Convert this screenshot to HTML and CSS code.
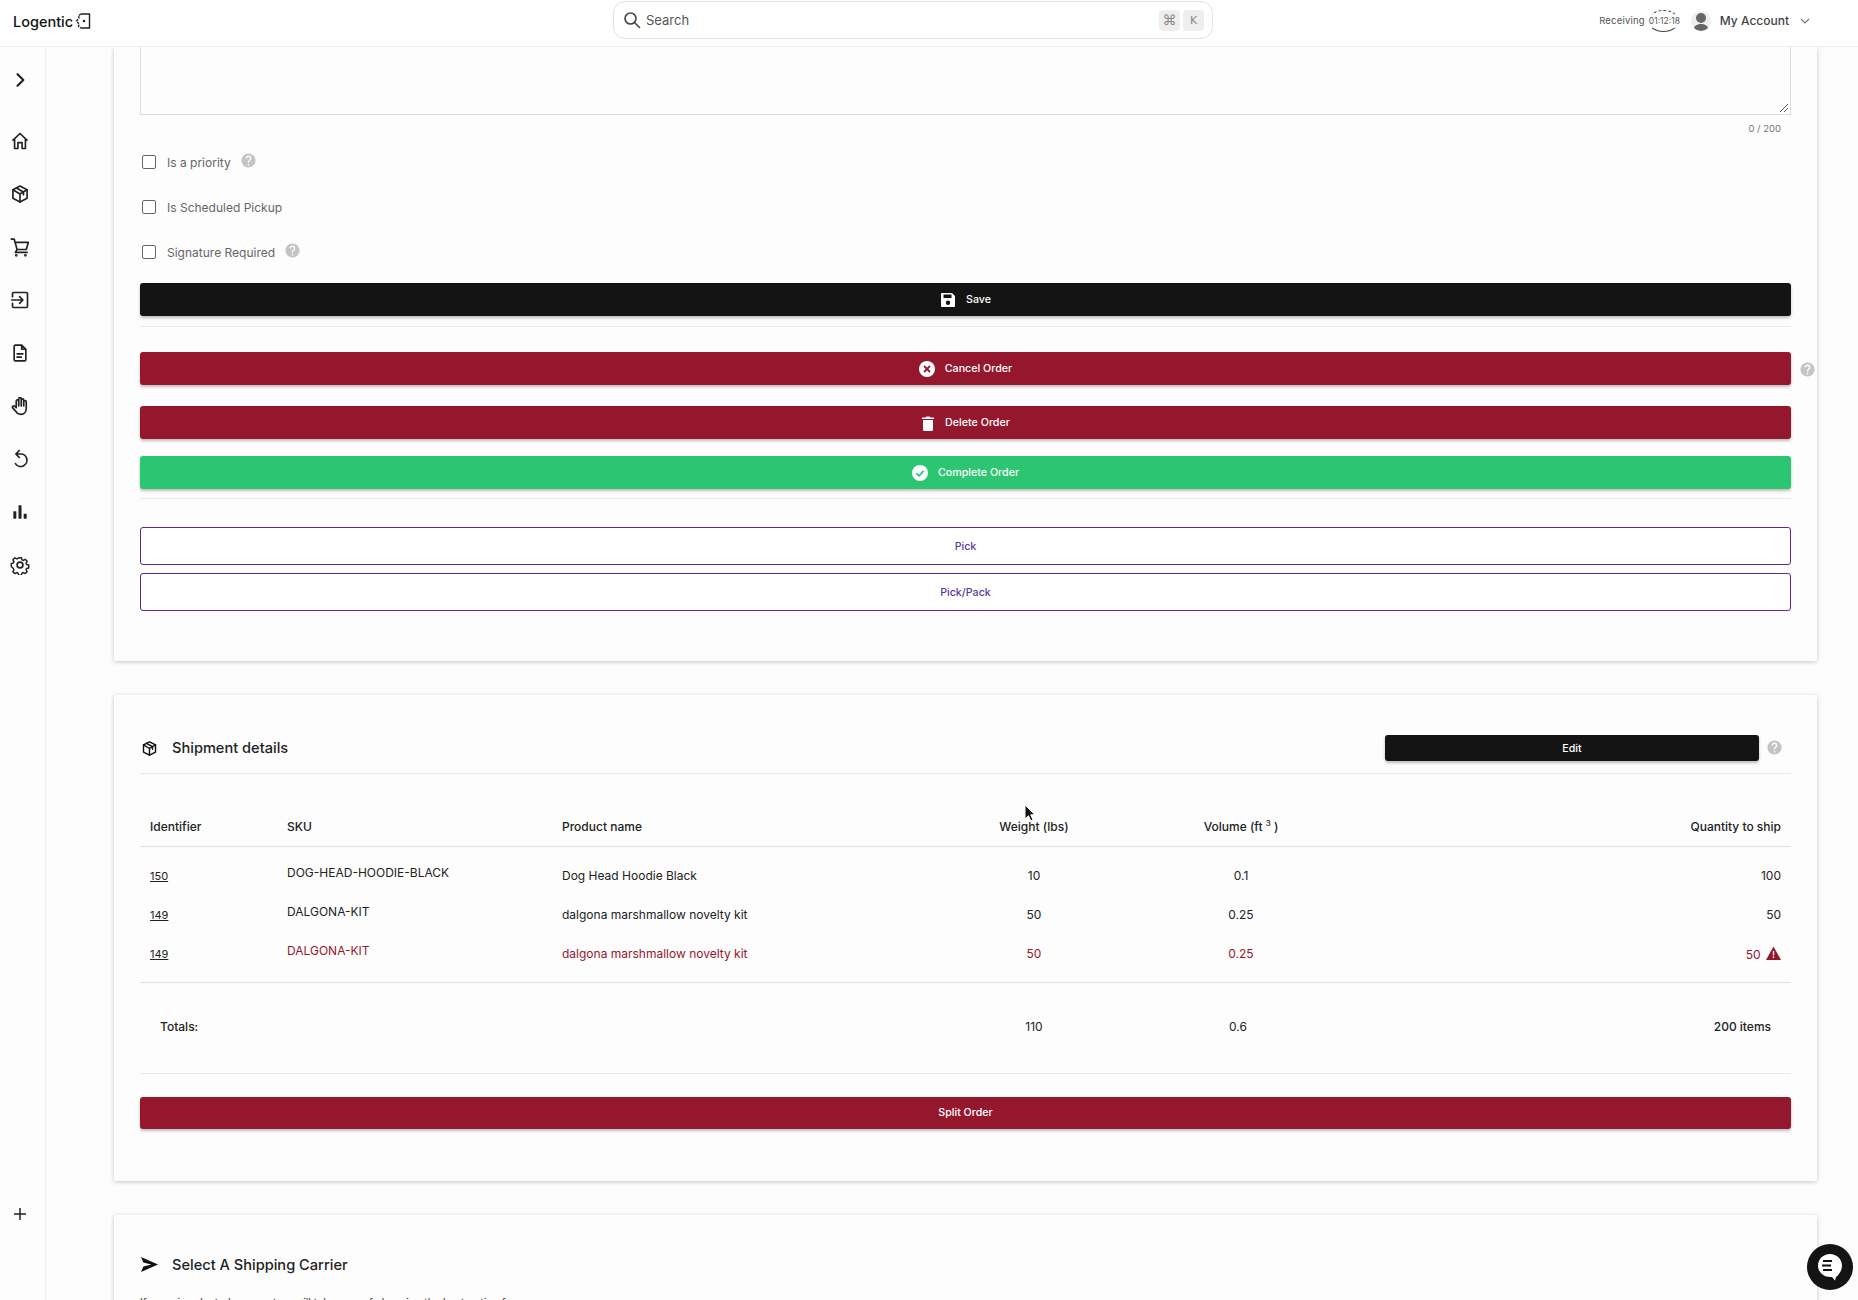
FILE: index.html
```html
<!DOCTYPE html>
<html lang="en">
<head>
  <meta charset="UTF-8" />
  <meta name="viewport" content="width=device-width, initial-scale=1.0" />
  <title>Logentic - Order</title>
  <link rel="stylesheet" href="styles.css">
</head>
<body>
  <svg class="defs" width="0" height="0">
    <symbol id="help" viewBox="0 0 24 24">
      <path fill="currentColor" d="M12 2a10 10 0 1 0 0 20 10 10 0 0 0 0-20zm1 17h-2v-2h2zm2.100-7.700-.9.9c-.8.7-1.200 1.300-1.200 2.800h-2v-.5c0-1.100.4-2.100 1.200-2.800l1.200-1.300c.4-.3.6-.8.6-1.400a2 2 0 0 0-4 0H8a4 4 0 0 1 8 0c0 .9-.4 1.700-.9 2.300z"/>
    </symbol>
    <symbol id="box" viewBox="0 0 24 24">
      <g fill="none" stroke="currentColor" stroke-width="2" stroke-linejoin="round" stroke-linecap="round">
        <path d="M12 2.500 20.500 7v10L12 21.500 3.500 17V7z"/>
        <path d="M3.500 7 12 12l8.500-5M12 12v9.500M7.700 4.700l8.500 4.800v3.500"/>
      </g>
    </symbol>
  </svg>

  <header class="topbar">
    <div class="brand">
      <span>Logentic</span>
      <svg width="18" height="18" viewBox="0 0 18 18" fill="none" stroke="#222" stroke-width="1.400">
        <path d="M7 2h8.500v14H7" />
        <path d="M7 2 4.500 3.500 5 6 2.500 9 5 12l-.5 2.500L7 16" stroke-dasharray="2.500 1"/>
        <circle cx="10" cy="9" r="1.300" fill="#222" stroke="none"/>
      </svg>
    </div>
    <div class="search">
      <svg width="18" height="18" viewBox="0 0 18 18" fill="none" stroke="#444" stroke-width="1.600" stroke-linecap="round">
        <circle cx="7.500" cy="7.500" r="5.500"/>
        <path d="m11.700 11.700 4.800 4.800"/>
      </svg>
      <span class="search-label">Search</span>
      <kbd class="key">⌘</kbd>
      <kbd class="key">K</kbd>
    </div>
    <div class="account">
      <span class="timer-label">Receiving</span>
      <span class="timer">01:12:18</span>
      <span class="avatar">
        <svg width="20" height="20" viewBox="0 0 20 20" fill="#666">
          <circle cx="10" cy="7" r="5"/>
          <path d="M2.500 20c0-5 3-7 7.500-7s7.500 2 7.500 7z"/>
        </svg>
      </span>
      <span class="account-name">My Account</span>
      <svg class="chevron" width="12" height="12" viewBox="0 0 12 12" fill="none" stroke="#777" stroke-width="1.200">
        <path d="m2 4 4 4 4-4"/>
      </svg>
    </div>
  </header>

  <div class="shell">
    <nav class="sidebar">
      <svg class="nav-toggle" width="20" height="20" viewBox="0 0 24 24" fill="none" stroke="#222" stroke-width="2.600" stroke-linecap="round" stroke-linejoin="round"><path d="m9 5 7 7-7 7"/></svg>
      <ul class="nav-list">
        <li><svg width="20" height="20" viewBox="0 0 24 24" fill="none" stroke="#222" stroke-width="2" stroke-linejoin="round"><path d="M3 11.500 12 3l9 8.500M5.500 9.500V21h4v-7h5v7h4V9.500"/></svg></li>
        <li><svg width="20" height="20" class="nav-box"><use href="#box"/></svg></li>
        <li><svg width="20" height="20" viewBox="0 0 24 24" fill="none" stroke="#222" stroke-width="2" stroke-linecap="round" stroke-linejoin="round"><path d="M1.500 2.500H5l3.500 12.500h11L22 6.500H6M8.500 15l-2 3.500h14"/><circle cx="7.500" cy="22" r=".7"/><circle cx="18.500" cy="22" r=".7"/></svg></li>
        <li><svg width="20" height="20" viewBox="0 0 24 24" fill="none" stroke="#222" stroke-width="2" stroke-linecap="round" stroke-linejoin="round"><path d="M3 8V4.500A1.500 1.500 0 0 1 4.500 3h15A1.500 1.500 0 0 1 21 4.500v15a1.500 1.500 0 0 1-1.500 1.500h-15A1.500 1.500 0 0 1 3 19.500V16M2 12h13M11.500 8l4 4-4 4"/></svg></li>
        <li><svg width="20" height="20" viewBox="0 0 24 24" fill="none" stroke="#222" stroke-width="2" stroke-linecap="round" stroke-linejoin="round"><path d="M14 2.500H6.500A1.500 1.500 0 0 0 5 4v16a1.500 1.500 0 0 0 1.500 1.500h11A1.500 1.500 0 0 0 19 20V7.500zM14 2.500v5h5M8.500 13h7M8.500 17h5"/></svg></li>
        <li><svg width="20" height="20" viewBox="0 0 24 24" fill="none" stroke="#222" stroke-width="2" stroke-linecap="round" stroke-linejoin="round"><path d="M7.500 13V6a1.500 1.500 0 0 1 3 0V3.500a1.500 1.500 0 0 1 3 0V5a1.500 1.500 0 0 1 3 0v2a1.500 1.500 0 0 1 3 0v8c0 4-2.500 7-6.500 7-3 0-4.500-1-6-3.500L3 14c-.7-1.200 1-3 2.500-1.800L7.500 14M10.500 6v6M13.500 4v8M16.500 6v6"/></svg></li>
        <li><svg width="20" height="20" viewBox="0 0 24 24" fill="none" stroke="#222" stroke-width="2" stroke-linecap="round" stroke-linejoin="round"><path d="M6.500 17.500A7.500 7.500 0 1 0 12 6H7.500M11 2 7 6l4 4"/></svg></li>
        <li><svg width="20" height="20" viewBox="0 0 24 24" fill="#222"><rect x="4" y="11" width="3.600" height="9" rx=".5"/><rect x="10.200" y="4" width="3.600" height="16" rx=".5"/><rect x="16.400" y="14" width="3.600" height="6" rx=".5"/></svg></li>
        <li><svg width="20" height="20" viewBox="0 0 24 24" fill="none" stroke="#222" stroke-width="2" stroke-linejoin="round"><path d="M10 2h4l.7 2.900 1.800.8 2.600-1.500 2.700 2.700-1.500 2.600.8 1.800 2.900.7v4l-2.900.7-.8 1.800 1.500 2.600-2.700 2.700-2.600-1.500-1.800.8-.7 2.900h-4l-.7-2.900-1.800-.8-2.600 1.500-2.700-2.700 1.500-2.600-.8-1.800L0 14v-4l2.900-.7.800-1.800-1.500-2.600 2.700-2.700 2.600 1.500 1.800-.8z" transform="translate(1.500 1.500) scale(.875)"/><circle cx="12" cy="12" r="3.500"/></svg></li>
      </ul>
      <svg class="nav-add" width="16" height="16" viewBox="0 0 16 16" stroke="#222" stroke-width="1.500"><path d="M8 2v12M2 8h12"/></svg>
    </nav>

    <main class="content">
      <section class="card card-cut">
        <div class="notes"><svg class="grip" width="10" height="10" viewBox="0 0 10 10" stroke="#555"><path d="m1 9 8-8M5 9l4-4"/></svg></div>
        <div class="counter">0 / 200</div>

        <label class="check check-first"><span class="box"></span>Is a priority<svg class="help help-up"><use href="#help"/></svg></label>
        <label class="check check-second"><span class="box"></span>Is Scheduled Pickup</label>
        <label class="check check-third"><span class="box"></span>Signature Required<svg class="help help-up"><use href="#help"/></svg></label>

        <button class="btn btn-black btn-save">
          <svg width="16" height="16" viewBox="0 0 16 16" fill="#fff"><path d="M2 1h10l3 3v10a1 1 0 0 1-1 1H2a1 1 0 0 1-1-1V2a1 1 0 0 1 1-1zm1.500 1.500V6h8V2.500zM8 8.500a2.200 2.200 0 1 0 0 4.400 2.200 2.200 0 0 0 0-4.400z" fill-rule="evenodd"/></svg>
          <span>Save</span>
        </button>
        <hr class="rule rule-save">

        <div class="btn-row">
          <button class="btn btn-red">
            <svg width="16" height="16" viewBox="0 0 16 16"><circle cx="8" cy="8" r="8" fill="#fff"/><path d="m5 5 6 6M11 5l-6 6" stroke="#95172d" stroke-width="1.800"/></svg>
            <span>Cancel Order</span>
          </button>
          <svg class="help help-side"><use href="#help"/></svg>
        </div>
        <button class="btn btn-red btn-delete">
          <svg width="14" height="16" viewBox="0 0 14 16" fill="#fff"><path d="M2 5h10v9.500a1.500 1.500 0 0 1-1.500 1.500h-7A1.500 1.500 0 0 1 2 14.500zM1 2.500h3.500L5.500 1.500h3l1 1H13V4H1z"/></svg>
          <span>Delete Order</span>
        </button>
        <button class="btn btn-green">
          <svg width="16" height="16" viewBox="0 0 16 16"><circle cx="8" cy="8" r="8" fill="#fff"/><path d="m4.300 8.300 2.700 2.500 4.700-5" fill="none" stroke="#2cc672" stroke-width="1.800"/></svg>
          <span>Complete Order</span>
        </button>
        <hr class="rule rule-complete">

        <button class="btn btn-outline">Pick</button>
        <button class="btn btn-outline btn-pack">Pick/Pack</button>
      </section>

      <section class="card card-shipment">
        <div class="card-head">
          <svg class="head-icon"><use href="#box"/></svg>
          <h2>Shipment details</h2>
          <button class="btn btn-black btn-edit">Edit</button>
          <svg class="help help-edit"><use href="#help"/></svg>
        </div>

        <table class="items">
          <thead>
            <tr>
              <th class="col-id">Identifier</th>
              <th class="col-sku">SKU</th>
              <th class="col-name">Product name</th>
              <th class="col-weight">Weight (lbs)</th>
              <th class="col-volume">Volume (ft <sup>3</sup> )</th>
              <th class="col-qty">Quantity to ship</th>
            </tr>
          </thead>
          <tbody>
            <tr>
              <td class="col-id"><a href="#">150</a></td>
              <td class="col-sku"><span>DOG-HEAD-HOODIE-BLACK</span></td>
              <td class="col-name">Dog Head Hoodie Black</td>
              <td class="col-weight">10</td>
              <td class="col-volume">0.1</td>
              <td class="col-qty">100</td>
            </tr>
            <tr>
              <td class="col-id"><a href="#">149</a></td>
              <td class="col-sku"><span>DALGONA-KIT</span></td>
              <td class="col-name">dalgona marshmallow novelty kit</td>
              <td class="col-weight">50</td>
              <td class="col-volume">0.25</td>
              <td class="col-qty">50</td>
            </tr>
            <tr class="short">
              <td class="col-id"><a href="#">149</a></td>
              <td class="col-sku"><span>DALGONA-KIT</span></td>
              <td class="col-name">dalgona marshmallow novelty kit</td>
              <td class="col-weight">50</td>
              <td class="col-volume">0.25</td>
              <td class="col-qty">50 <svg class="warn" width="15" height="14" viewBox="0 0 15 14"><path fill="#95172d" d="M7.500.5 15 14H0z"/><path stroke="#fff" stroke-width="1.400" d="M7.500 5v4.500M7.500 10.500V12"/></svg></td>
            </tr>
          </tbody>
          <tfoot>
            <tr>
              <td class="col-id totals-label" colspan="3">Totals:</td>
              <td class="col-weight">110</td>
              <td class="col-volume totals-volume">0.6</td>
              <td class="col-qty totals-qty">200 items</td>
            </tr>
          </tfoot>
        </table>

        <button class="btn btn-red btn-split">Split Order</button>
      </section>

      <section class="card card-carrier">
        <div class="card-head card-head-plain">
          <svg class="head-icon" viewBox="0 0 18 16" fill="#111"><path d="M0 0 18 8 0 16l2.500-6L11 8 2.500 6z"/></svg>
          <h2>Select A Shipping Carrier</h2>
        </div>
        <p class="carrier-note">If none is selected, our system will take care of choosing the best option for you.</p>
      </section>
    </main>
  </div>

  <svg class="pointer" width="12" height="18" viewBox="0 0 12 18"><path d="M1 1v14l3.500-3.200 2.300 5 2.200-1-2.300-5H11z" fill="#111" stroke="#fff" stroke-width="1"/></svg>

  <div class="chat">
    <svg width="26" height="28" viewBox="0 0 26 28"><path fill="#fff" d="M13 1c6.600 0 12 5 12 11.500S19.600 24 19 24l-1 3.500L15 24h-2C6.400 24 1 19 1 12.500S6.400 1 13 1z"/><path stroke="#141414" stroke-width="2" d="M6 8h9M5 12.500h9M6 17h9"/></svg>
  </div>
</body>
</html>
```

FILE: styles.css
```css
* {
  margin: 0;
  padding: 0;
  box-sizing: border-box;
}

html, body {
  height: 1300px;
  overflow: hidden;
}

body {
  font-family: 'Inter', 'Liberation Sans', sans-serif;
  font-size: 12px;
  color: #222;
  background: #fcfcfc;
  position: relative;
  display: flex;
  flex-direction: column;
}

.defs {
  display: block;
  height: 0;
}

/* top bar */
.topbar {
  height: 47px;
  flex-shrink: 0;
  background: #fff;
  border-bottom: 1px solid #efefef;
  display: grid;
  grid-template-columns: 613px 600px 1fr;
  align-items: center;
}

.brand {
  display: flex;
  align-items: center;
  gap: 1px;
  padding: 0 0 4px 13px;
  font-size: 14.500px;
  font-weight: 500;
  color: #111;
}

.search {
  height: 38px;
  margin-top: -6px;
  border: 1px solid #e2e2e2;
  border-radius: 12px;
  display: flex;
  align-items: center;
  gap: 3px;
  padding: 0 8px 0 9px;
  color: #555;
}

.search-label {
  flex: 1;
  margin-left: 2px;
  font-size: 13px;
}

.key {
  width: 21px;
  height: 21px;
  background: #eee;
  border-radius: 4px;
  color: #888;
  font-family: 'DejaVu Sans', sans-serif;
  font-size: 11px;
  text-align: center;
  line-height: 21px;
}

.key:first-of-type {
  font-size: 14px;
}

.account {
  display: flex;
  align-items: center;
  justify-content: flex-end;
  padding: 0 47px 5px 0;
  color: #555;
}

.timer-label {
  font-size: 9.500px;
  letter-spacing: 0.2px;
}

.timer {
  width: 31px;
  margin-left: 3px;
  font-size: 8.500px;
  text-align: center;
  border-radius: 50%;
  padding: 5px 0;
  border-top: 1.500px dashed #444;
  border-bottom: 1.500px solid #444;
  border-left: 1.500px solid transparent;
  border-right: 1.500px solid transparent;
  white-space: nowrap;
}

.avatar {
  width: 20px;
  height: 20px;
  border-radius: 50%;
  margin-left: 12px;
  overflow: hidden;
  background: #eee;
}

.account-name {
  margin-left: 9px;
  font-size: 12px;
  font-weight: 500;
  color: #444;
}

.chevron {
  margin-left: 10px;
}

/* layout */
.shell {
  flex: 1;
  display: flex;
  min-height: 0;
}

.sidebar {
  width: 46px;
  flex-shrink: 0;
  border-right: 1px solid #efefef;
  background: #fdfdfd;
  display: flex;
  flex-direction: column;
  align-items: center;
  padding-right: 5px;
}

.nav-toggle {
  margin-top: 23px;
}

.nav-list {
  list-style: none;
  margin-top: 41px;
  display: flex;
  flex-direction: column;
  gap: 33px;
}

.nav-list li {
  height: 20px;
}

.nav-box {
  color: #222;
}

.nav-add {
  margin-top: auto;
  margin-bottom: 78px;
}

.content {
  flex: 1;
  min-width: 0;
  padding: 0 41px 0 68px;
  display: flex;
  flex-direction: column;
  gap: 34px;
  overflow: hidden;
}

/* cards */
.card {
  background: #fdfdfd;
  border-radius: 2px;
  box-shadow: 0 1px 4px rgba(0, 0, 0, 0.22);
  padding: 0 26px;
  flex-shrink: 0;
}

.card-cut {
  height: 614px;
  border-radius: 0 0 2px 2px;
  clip-path: inset(0 -8px -8px -8px);
}

.notes {
  height: 68px;
  border: 1px solid #dcdcdc;
  border-top: none;
  position: relative;
}

.grip {
  position: absolute;
  right: 1px;
  bottom: 1px;
}

.counter {
  margin-top: 8px;
  padding-right: 10px;
  text-align: right;
  font-size: 9.500px;
  color: #777;
  line-height: 11px;
}

.check {
  display: flex;
  align-items: center;
  padding-left: 2px;
  height: 20px;
  color: #666;
}

.check-first {
  margin-top: 18px;
}

.check-second {
  margin-top: 25px;
}

.check-third {
  margin-top: 25px;
}

.box {
  width: 14px;
  height: 14px;
  margin-right: 11px;
  border: 1.500px solid #666;
  border-radius: 2px;
  background: #fff;
}

.help {
  width: 17px;
  height: 17px;
  color: #c4c4c4;
  flex-shrink: 0;
}

.help-up {
  margin: -4px 0 0 9px;
}

.btn {
  display: flex;
  align-items: center;
  justify-content: center;
  gap: 10px;
  width: 100%;
  height: 33px;
  border: none;
  border-radius: 3px;
  font-family: inherit;
  font-size: 10.700px;
  font-weight: 500;
  color: #fff;
  box-shadow: 0 2px 3px rgba(0, 0, 0, 0.25);
}

.btn-black {
  background: #141414;
}

.btn-red {
  background: #95172d;
}

.btn-green {
  background: #2cc672;
}

.btn-save {
  margin-top: 21px;
}

.rule {
  border: none;
  border-top: 1px solid #e8e8e8;
}

.rule-save {
  margin: 10px 0 25px;
}

.btn-row {
  position: relative;
}

.help-side {
  position: absolute;
  left: calc(100% + 8px);
  top: 9px;
}

.btn-delete {
  margin-top: 21px;
}

.btn-green {
  margin-top: 17px;
}

.rule-complete {
  margin: 9px 0 28px;
}

.btn-outline {
  height: 38px;
  background: #fff;
  border: 1px solid #5a2a90;
  color: #5b3a9e;
  box-shadow: none;
}

.btn-pack {
  margin-top: 8px;
}

.card-shipment {
  height: 486px;
}

.card-head {
  height: 79px;
  display: flex;
  align-items: center;
  border-bottom: 1px solid #e8e8e8;
  padding-top: 28px;
}

.card-head-plain {
  border-bottom: none;
  height: 67px;
  padding-top: 32px;
}

.card-head h2 {
  flex: 1;
  margin-left: 14px;
  font-size: 14.600px;
  font-weight: 500;
  color: #222;
}

.head-icon {
  width: 17px;
  height: 17px;
  margin-left: 1px;
  color: #111;
}

.btn-edit {
  width: 374px;
  height: 26px;
}

.help-edit {
  margin: 0 8px 2px 7px;
}

/* table */
.items {
  width: 100%;
  margin-top: 32px;
  border-collapse: collapse;
  table-layout: fixed;
}

.items th, .items td {
  padding: 0 10px;
  font-weight: 400;
}

.items th {
  height: 40px;
  font-weight: 500;
  border-bottom: 1px solid #e0e0e0;
  padding-top: 2px;
}

.items sup {
  font-size: 8px;
  line-height: 0;
}

.items tbody tr {
  height: 39px;
}

.items tbody tr:first-child {
  height: 49px;
}

.items tbody tr:first-child td {
  padding-top: 10px;
}

.items tbody tr:last-child {
  height: 48px;
}

.items tbody tr:last-child td {
  padding-bottom: 8px;
}

.col-id {
  width: 137px;
  text-align: left;
}

.col-sku {
  width: 275px;
  text-align: left;
}

.col-sku span {
  display: block;
  margin-bottom: 6px;
}

.col-name {
  width: 397px;
  text-align: left;
}

.col-weight {
  width: 170px;
  text-align: center;
}

.col-volume {
  width: 244px;
  text-align: center;
}

.col-qty {
  text-align: right;
}

.col-id a {
  color: #222;
  font-size: 11px;
}

.short td, .short a {
  color: #95172d;
}

.short .col-id a {
  color: #222;
}

.warn {
  vertical-align: -1px;
  margin-left: 2px;
}

.items tfoot tr {
  height: 91px;
  border-top: 1px solid #e0e0e0;
  border-bottom: 1px solid #e8e8e8;
}

.items tfoot td {
  padding-bottom: 2px;
}

.items tfoot .totals-label {
  padding-left: 20px;
  font-weight: 500;
}

.items tfoot .totals-volume {
  padding-right: 16px;
}

.items tfoot .totals-qty {
  padding-right: 20px;
  font-weight: 500;
}

.btn-split {
  margin-top: 23px;
  height: 32px;
}

.card-carrier {
  height: 200px;
}

.carrier-note {
  margin-top: 14px;
  font-size: 10.500px;
  color: #333;
}

/* things that lie over the page */
.pointer {
  position: absolute;
  left: 1024px;
  top: 804px;
}

.chat {
  position: absolute;
  left: 1807px;
  top: 1244px;
  width: 46px;
  height: 46px;
  border-radius: 50%;
  background: #141414;
  display: flex;
  align-items: center;
  justify-content: center;
}
```
